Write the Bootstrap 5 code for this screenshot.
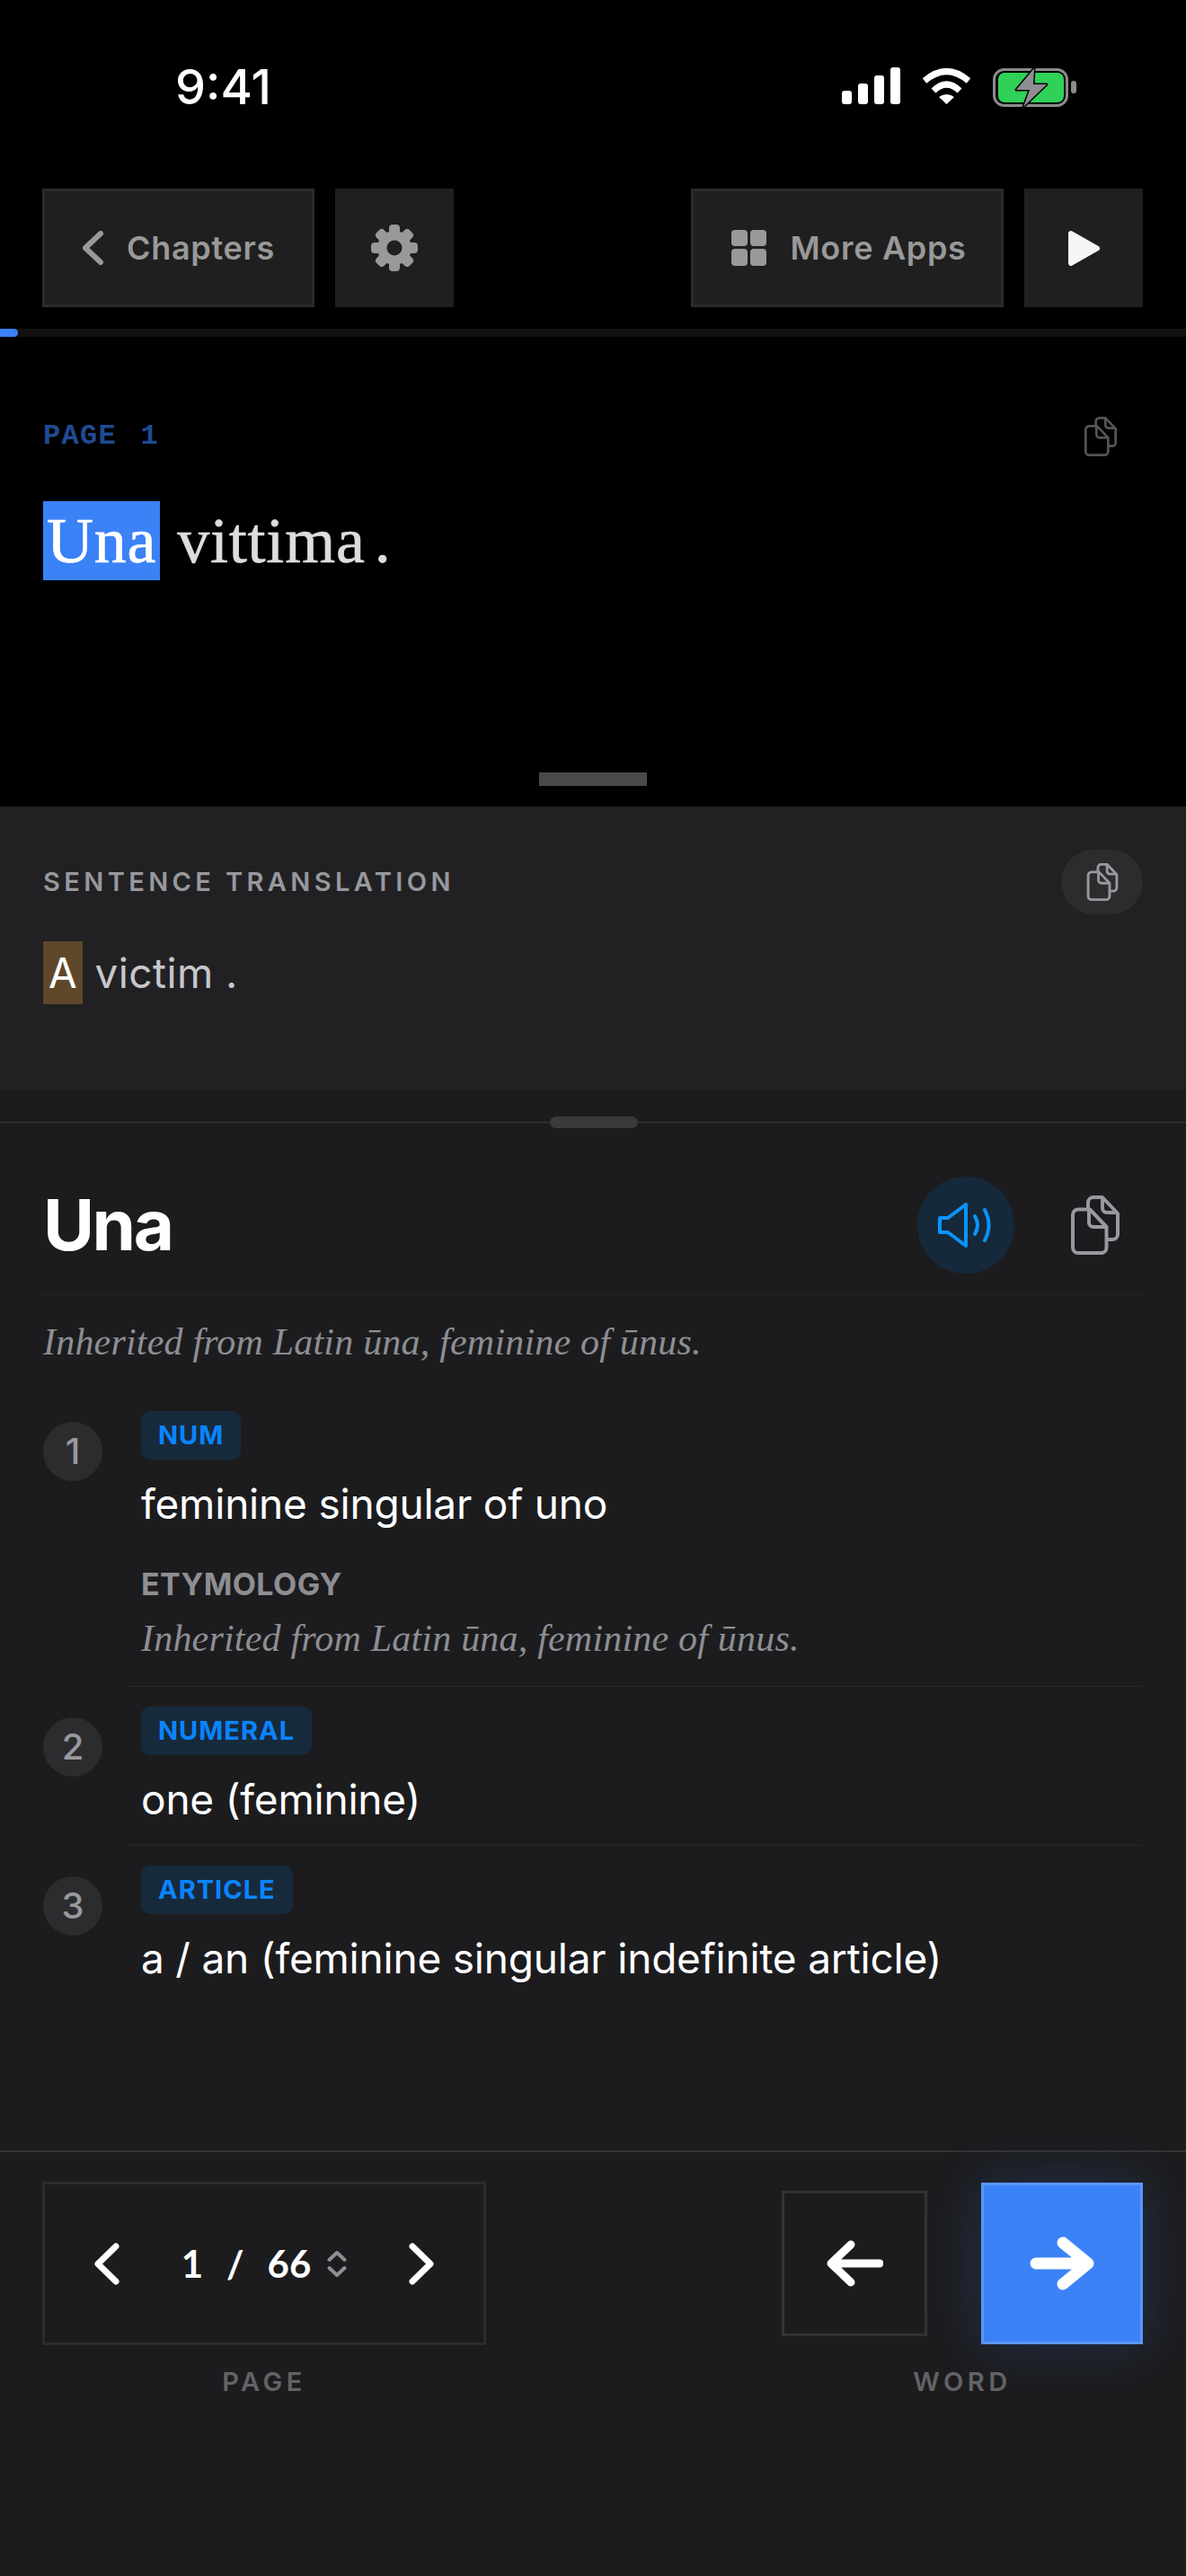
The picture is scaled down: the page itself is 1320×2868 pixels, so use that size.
<!DOCTYPE html>
<html lang="en">
<head>
  <meta charset="UTF-8">
  <meta name="viewport" content="width=device-width, initial-scale=1">
  <title>Una - Reader</title>
  <link href="https://cdn.jsdelivr.net/npm/bootstrap@5.3.3/dist/css/bootstrap.min.css" rel="stylesheet">
  <style>
    body { width: 1320px; height: 2868px; margin: 0; background: #1c1c1e; color: #fff; font-family: "Inter", "Liberation Sans", sans-serif; overflow: hidden; }
    .top-pane { height: 898px; background: #000; }
    .status-row { height: 210px; padding: 66px 122px 0 195px; }
    .clock { font-size: 54px; line-height: 62px; font-weight: 500; }
    .status-icons { height: 62px; padding-top: 9px; gap: 23px; }
    .tool-row { height: 132px; padding: 0 48px 0 47px; gap: 23px; }
    .tool-btn { height: 132px; background: #1f1f1f; border: 3px solid #2b2b2b; color: #999; font-size: 36px; font-weight: 600; letter-spacing: .7px; line-height: 1; padding: 0; }
    .tool-btn:hover, .tool-btn:active { background: #1f1f1f; border-color: #2b2b2b; color: #999; }
    .tool-square { width: 132px; border-color: #202020; }
    .tool-chapters { width: 303px; gap: 26px; }
    .tool-apps { width: 348px; gap: 26px; padding-left: 4px; }
    .read-track { height: 9px; margin-top: 24px; background: #111; }
    .read-fill { width: 20px; height: 9px; background: #3b82f6; border-radius: 0 5px 5px 0; }
    .page-row { height: 60px; margin-top: 81px; padding: 0 77px 0 48px; }
    .page-tag { font-family: "Liberation Mono", monospace; font-size: 32px; font-weight: 700; letter-spacing: 1.3px; word-spacing: 6px; color: #1f4b93; }
    .source-line { margin: 42px 0 0 48px; font-family: "Liberation Serif", serif; font-size: 72px; line-height: 88px; color: #ddd; letter-spacing: .8px; -webkit-text-stroke: .7px currentColor; }
    .hl-source { display: inline-block; padding: 0 4px; background: #3b82f6; color: #fff; }
    .stop-mark { margin-left: 10px; }
    .pane-grip { width: 120px; height: 15px; margin: auto auto 23px; background: #4a4a4a; }
    .trans-pane { height: 315px; padding: 48px 48px 0; background: #212123; }
    .trans-label { font-size: 29px; font-weight: 600; letter-spacing: 4.4px; color: #98989d; }
    .copy-pill { width: 91px; height: 72px; border-radius: 36px; background: #2c2c2e; }
    .trans-line { margin-top: 30px; font-size: 46px; line-height: 70px; letter-spacing: .4px; color: #c7c7cc; }
    .hl-trans { display: inline-block; padding: 0 6px; background: #5f472b; color: #fff; }
    .drawer { flex: 1; padding-top: 36px; }
    .drawer-rule { height: 1px; background: #3a3a3c; }
    .drawer-grip { top: -6px; left: 612px; width: 98px; height: 13px; border-radius: 7px; background: #3a3a3c; }
    .word-head { margin: 60px 48px 0; padding-bottom: 23px; border-bottom: 1px solid #262628; }
    .word-title { font-size: 78px; line-height: 108px; font-weight: 700; letter-spacing: -2.500px; }
    .speak-btn { width: 108px; height: 108px; border-radius: 50%; background: #16293a; margin-right: 63px; }
    .copy-large { margin-right: 26px; }
    .ety-text { font-family: "Liberation Serif", serif; font-style: italic; font-size: 42px; line-height: 50px; letter-spacing: .2px; color: #8e8e93; }
    .ety-top { margin: 27px 48px 0; }
    .sense-list { margin: 52px 48px 0; }
    .sense-num { flex: 0 0 66px; width: 66px; height: 66px; margin: 12px 43px 0 0; border-radius: 50%; background: #2c2c2e; color: #98989d; font-size: 40px; font-weight: 500; }
    .pos-tag { height: 54px; padding: 0 19px; border-radius: 10px; background: #172a3c; color: #0a84ff; font-size: 29px; font-weight: 700; letter-spacing: 1px; }
    .sense-def { margin-top: 19px; font-size: 46px; line-height: 60px; letter-spacing: -.2px; }
    .ety-head { margin-top: 40px; font-size: 34px; line-height: 40px; font-weight: 700; letter-spacing: .4px; color: #8e8e93; }
    .ety-sense { margin-top: 15px; }
    .sense-rule { height: 1px; margin: 28px 0 22px 95px; background: #28282a; }
    .sense-rule.tight { margin-top: 21px; margin-bottom: 22px; }
    .foot-bar { flex: 0 0 474px; border-top: 2px solid #333335; padding: 33px 48px 0 47px; }
    .pager-box { width: 494px; height: 182px; padding: 0 54px; border: 3px solid #2c2c2e; }
    .pager-count { font-family: "Lato", sans-serif; font-size: 42px; font-weight: 700; gap: 26px; }
    .pager-spin { margin-left: 18px; }
    .word-btns { height: 182px; gap: 60px; }
    .word-back { width: 162px; height: 162px; border: 3px solid #333335; border-radius: 0; padding: 0; }
    .word-next { width: 180px; height: 180px; background: #3b82f6; border: 3px solid #5a96f7; border-radius: 0; padding: 0; box-shadow: 0 0 60px rgba(59, 130, 246, .22); }
    .word-next:hover, .word-next:active { background: #3b82f6; border-color: #5a96f7; }
    .foot-label { margin-top: 20px; font-size: 29px; line-height: 42px; font-weight: 600; letter-spacing: 4.500px; color: #636366; }
  </style>
</head>
<body class="d-flex flex-column">
  <section class="top-pane d-flex flex-column">
    <div class="status-row d-flex justify-content-between align-items-start">
      <span class="clock">9:41</span>
      <div class="status-icons d-flex align-items-start">
        <svg width="65" height="41" viewBox="0 0 65 41" fill="#fff"><rect x="0" y="26" width="11" height="15" rx="3"/><rect x="18" y="18" width="11" height="23" rx="3"/><rect x="36" y="9" width="11" height="32" rx="3"/><rect x="54" y="0" width="11" height="41" rx="3"/></svg>
        <svg width="57" height="41" viewBox="0 0 57 41"><path d="M4 15 Q28.5 -6 53 15" fill="none" stroke="#fff" stroke-width="7"/><path d="M14 26 Q28.5 12 43 26" fill="none" stroke="#fff" stroke-width="7"/><path d="M20 33 Q28.5 27 37 33 L28.5 41z" fill="#fff"/></svg>
        <svg width="93" height="45" viewBox="0 0 93 45"><rect x="1.5" y="2.5" width="81" height="40" rx="11" fill="none" stroke="#8c8c8c" stroke-width="3"/><rect x="6" y="6" width="73" height="33" rx="7" fill="#30d158"/><rect x="87" y="15" width="6" height="14" rx="3" fill="#8c8c8c"/><path d="M46 1 L26 25 H41 L34 44 L60 19 H45z" fill="#8e8e93" stroke="#000" stroke-width="3" stroke-linejoin="round" paint-order="stroke"/></svg>
      </div>
    </div>

    <div class="tool-row d-flex">
      <button type="button" class="btn tool-btn tool-chapters rounded-0 d-flex align-items-center justify-content-center">
        <svg width="24" height="38" viewBox="0 0 24 38"><path d="M21 3 L4 19 L21 35" fill="none" stroke="#999" stroke-width="6" stroke-linecap="round" stroke-linejoin="round"/></svg>
        <span>Chapters</span>
      </button>
      <button type="button" class="btn tool-btn tool-square rounded-0 d-flex align-items-center justify-content-center" aria-label="Settings">
        <svg width="52" height="52" viewBox="0 0 52 52" fill="#999">
          <circle cx="26" cy="26" r="19"/>
          <rect x="20" y="0" width="12" height="52" rx="4"/>
          <rect x="20" y="0" width="12" height="52" rx="4" transform="rotate(45 26 26)"/>
          <rect x="20" y="0" width="12" height="52" rx="4" transform="rotate(90 26 26)"/>
          <rect x="20" y="0" width="12" height="52" rx="4" transform="rotate(135 26 26)"/>
          <circle cx="26" cy="26" r="8.5" fill="#1f1f1f"/>
        </svg>
      </button>
      <button type="button" class="btn tool-btn tool-apps rounded-0 ms-auto d-flex align-items-center justify-content-center">
        <svg width="39" height="40" viewBox="0 0 39 40" fill="#999"><rect x="0" y="0" width="18" height="18" rx="4"/><rect x="21" y="0" width="18" height="18" rx="4"/><rect x="0" y="21" width="18" height="19" rx="4"/><rect x="21" y="21" width="18" height="19" rx="4"/></svg>
        <span>More Apps</span>
      </button>
      <button type="button" class="btn tool-btn tool-square rounded-0 d-flex align-items-center justify-content-center" aria-label="Play">
        <svg width="37" height="41" viewBox="0 0 37 41"><path d="M4 4 L33 20.5 L4 37z" fill="#f5f5f5" stroke="#f5f5f5" stroke-width="6" stroke-linejoin="round"/></svg>
      </button>
    </div>

    <div class="read-track"><div class="read-fill"></div></div>

    <div class="page-row d-flex justify-content-between align-items-center">
      <span class="page-tag">PAGE 1</span>
      <svg width="36" height="44" viewBox="0 0 54 66" fill="none" stroke="#555" stroke-width="4" stroke-linejoin="round"><use href="#copy-shape"/></svg>
    </div>
    <div class="source-line"><span class="hl-source">Una</span> vittima<span class="stop-mark">.</span></div>
    <div class="pane-grip"></div>
  </section>

  <section class="trans-pane">
    <div class="d-flex justify-content-between align-items-center">
      <span class="trans-label">SENTENCE TRANSLATION</span>
      <div class="copy-pill d-flex align-items-center justify-content-center">
        <svg width="36" height="42" viewBox="0 0 54 66" fill="none" stroke="#98989d" stroke-width="4.5" stroke-linejoin="round"><use href="#copy-shape"/></svg>
      </div>
    </div>
    <div class="trans-line"><span class="hl-trans">A</span> victim .</div>
  </section>

  <main class="drawer">
    <div class="drawer-rule position-relative"><div class="drawer-grip position-absolute"></div></div>
    <div class="word-head d-flex align-items-center">
      <h1 class="word-title m-0">Una</h1>
      <div class="speak-btn ms-auto d-flex align-items-center justify-content-center">
        <svg width="62" height="50" viewBox="0 0 62 50" fill="none" stroke="#0a94ff" stroke-width="4" stroke-linecap="round" stroke-linejoin="round">
          <path d="M2 17 H11 L31 2 V48 L11 33 H2z"/>
          <path d="M41 15 Q47 25 41 35"/>
          <path d="M52 8 Q61 25 52 42"/>
        </svg>
      </div>
      <svg class="copy-large" width="54" height="66" viewBox="0 0 54 66" fill="none" stroke="#98989d" stroke-width="4" stroke-linejoin="round"><use href="#copy-shape"/></svg>
    </div>
    <p class="ety-text ety-top mb-0">Inherited from Latin ūna, feminine of ūnus.</p>

    <div class="sense-list">
      <div class="d-flex">
        <div class="sense-num d-flex align-items-center justify-content-center">1</div>
        <div>
          <span class="pos-tag d-inline-flex align-items-center">NUM</span>
          <div class="sense-def">feminine singular of uno</div>
          <div class="ety-head">ETYMOLOGY</div>
          <div class="ety-text ety-sense">Inherited from Latin ūna, feminine of ūnus.</div>
        </div>
      </div>
      <div class="sense-rule"></div>
      <div class="d-flex">
        <div class="sense-num d-flex align-items-center justify-content-center">2</div>
        <div>
          <span class="pos-tag d-inline-flex align-items-center">NUMERAL</span>
          <div class="sense-def">one (feminine)</div>
        </div>
      </div>
      <div class="sense-rule tight"></div>
      <div class="d-flex">
        <div class="sense-num d-flex align-items-center justify-content-center">3</div>
        <div>
          <span class="pos-tag d-inline-flex align-items-center">ARTICLE</span>
          <div class="sense-def">a / an (feminine singular indefinite article)</div>
        </div>
      </div>
    </div>
  </main>

  <footer class="foot-bar d-flex justify-content-between">
    <div class="d-flex flex-column align-items-center">
      <div class="pager-box d-flex align-items-center justify-content-between">
        <svg width="29" height="47" viewBox="0 0 29 47"><path d="M25 4 L5 23.5 L25 43" fill="none" stroke="#fff" stroke-width="7" stroke-linecap="round" stroke-linejoin="round"/></svg>
        <div class="d-flex align-items-center">
          <div class="pager-count d-flex align-items-center"><span>1</span><span>/</span><span>66</span></div>
          <svg class="pager-spin" width="22" height="31" viewBox="0 0 22 31"><path d="M2.500 11 L11 3 L19.500 11 M2.500 20 L11 28 L19.500 20" fill="none" stroke="#8e8e93" stroke-width="4" stroke-linecap="round" stroke-linejoin="round"/></svg>
        </div>
        <svg width="29" height="47" viewBox="0 0 29 47"><path d="M4 4 L24 23.5 L4 43" fill="none" stroke="#fff" stroke-width="7" stroke-linecap="round" stroke-linejoin="round"/></svg>
      </div>
      <div class="foot-label">PAGE</div>
    </div>
    <div class="d-flex flex-column align-items-center">
      <div class="word-btns d-flex align-items-center">
        <button type="button" class="btn word-back d-flex align-items-center justify-content-center" aria-label="Previous word">
          <svg width="63" height="52" viewBox="0 0 63 52"><path d="M59 26 H6 M27 5 L5 26 L27 47" fill="none" stroke="#fff" stroke-width="9" stroke-linecap="round" stroke-linejoin="round"/></svg>
        </button>
        <button type="button" class="btn word-next d-flex align-items-center justify-content-center" aria-label="Next word">
          <svg width="72" height="60" viewBox="0 0 72 60"><path d="M7 30 H65 M37 7 L65 30 L37 53" fill="none" stroke="#fff" stroke-width="13" stroke-linecap="round" stroke-linejoin="round"/></svg>
        </button>
      </div>
      <div class="foot-label">WORD</div>
    </div>
  </footer>

  <svg width="0" height="0" class="position-absolute">
    <defs>
      <g id="copy-shape">
        <path d="M8 15.500 H21 L39.500 35 V58 a6 6 0 0 1 -6 6 H8 a6 6 0 0 1 -6 -6 V21.500 a6 6 0 0 1 6 -6z"/>
        <path d="M20 15.500 V30 a5 5 0 0 0 5 5 H39.500"/>
        <path d="M19 15 V8 a6 6 0 0 1 6 -6 H35 L52 20 V43 a6 6 0 0 1 -6 6 H40"/>
        <path d="M35 2 V14 a5 5 0 0 0 5 5 H52"/>
      </g>
    </defs>
  </svg>
  <script src="https://cdn.jsdelivr.net/npm/bootstrap@5.3.3/dist/js/bootstrap.bundle.min.js"></script>
</body>
</html>
